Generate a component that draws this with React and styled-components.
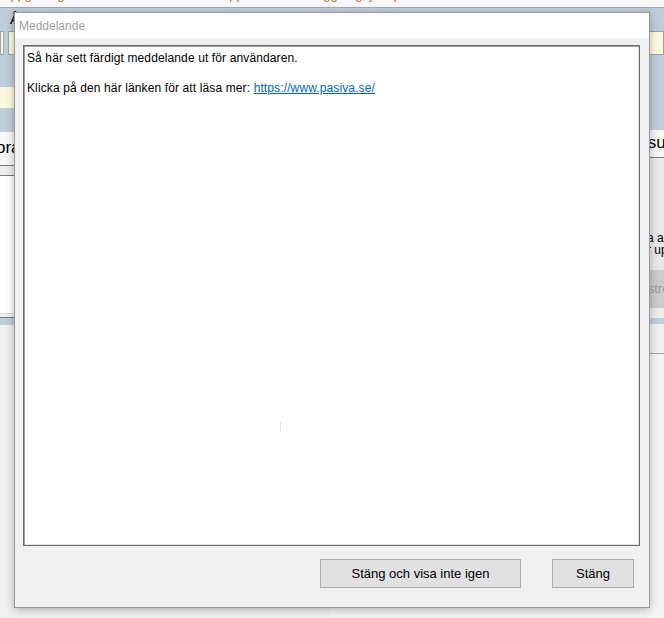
import styled, { createGlobalStyle } from 'styled-components'

const GlobalStyle = createGlobalStyle`
  html, body {
    margin: 0;
    padding: 0;
  }
  body {
    font-family: "Liberation Sans", Arial, sans-serif;
    background: #f0f0f0;
    overflow: hidden;
  }
`

const Screen = styled.div`
  position: relative;
  width: 664px;
  height: 618px;
  overflow: hidden;
`

// Background application, mostly hidden behind the dialog
const BackApp = styled.div`
  display: flex;
  flex-direction: column;
  height: 100%;
`

const Caption = styled.div`
  height: 7px;
  overflow: hidden;
  background: #f7f7f7;
  border-bottom: 1px solid #a7a7a7;
  color: #c8702e;
  font-size: 13px;
  line-height: 13px;
  white-space: nowrap;

  span {
    display: block;
    padding-left: 1px;
    transform: translateY(-12px);
  }
`

const Toolbar = styled.div`
  height: 23px;
  display: flex;
  justify-content: space-between;
  padding: 2px 10px 0 10px;
  box-sizing: border-box;
  background: #bfcddb;
  font-size: 15px;
  color: #000;
`

const FieldRow = styled.div`
  height: 24px;
  display: flex;
  gap: 4px;
  background: #bfcddb;
`

const Field = styled.div`
  flex: 0 0 ${p => p.$w}px;
  margin-left: ${p => p.$push ? 'auto' : '0'};
  background: #fbf9dd;
  border: 1px solid #9aa4ae;
  box-sizing: border-box;
`

const Panels = styled.div`
  flex: 1;
  display: flex;
`

const Pane = styled.div`
  display: flex;
  flex-direction: column;
  flex: ${p => p.$grow ? 1 : `0 0 ${p.$w}px`};
`

const Band = styled.div`
  flex: 0 0 ${p => p.$h}px;
  background: ${p => p.$bg || '#bfcddb'};
  border-bottom: ${p => p.$line ? `1px solid ${p.$line}` : 'none'};
  box-sizing: border-box;
`

const TabTitle = styled.div`
  flex: 0 0 ${p => p.$h}px;
  box-sizing: border-box;
  padding: ${p => p.$top}px 0 0 ${p => p.$indent}px;
  background: #f7f7f7;
  border-bottom: 1px solid #7a7a7a;
  font-size: 17px;
  line-height: 20px;
  white-space: nowrap;
  overflow: hidden;
  text-indent: ${p => p.$shift || 0}px;
`

const Fill = styled.div`
  flex: 1;
  background: ${p => p.$bg || '#f0f0f0'};
`

const SidePanel = styled.div`
  flex: 0 0 149px;
  display: flex;
  flex-direction: column;
  align-items: flex-start;
  padding: 74px 0 0 317px;
  box-sizing: border-box;
  background: #e8e8e8;
  font-size: 12px;
  line-height: 12px;
  white-space: nowrap;
`

const GreyButton = styled.div`
  margin: 14px 0 0 -26px;
  height: 38px;
  width: 120px;
  display: flex;
  align-items: center;
  background: #cbcbcb;
  color: #9a9a9a;
  font-size: 13px;
`

// Dialog
const Dialog = styled.div`
  position: absolute;
  left: 14px;
  top: 12px;
  width: 636px;
  height: 596px;
  box-sizing: border-box;
  display: flex;
  flex-direction: column;
  background: #f0f0f0;
  border: 1px solid #9a9a9a;
  box-shadow: 0 2px 8px rgba(0, 0, 0, 0.28);
`

const TitleBar = styled.div`
  flex: 0 0 25px;
  display: flex;
  align-items: center;
  padding-left: 4px;
  background: #fff;
  color: #a0a0a0;
  font-size: 12px;
`

const Body = styled.div`
  flex: 1;
  display: flex;
  flex-direction: column;
  padding: 7px 9px 0 8px;
`

const MessageBox = styled.div`
  position: relative;
  flex: 0 0 501px;
  box-sizing: border-box;
  padding: 5px 3px;
  background: #fff;
  border: 1px solid #6a6a6a;
  box-shadow: inset 1px 1px 0 #a0a0a0, inset -1px -1px 0 #e3e3e3;
  font-size: 12px;
  line-height: 15px;
  letter-spacing: 0.12px;
  color: #000;

  p {
    margin: 0 0 15px;
  }

  a {
    color: #0066cc;
    text-decoration: underline;
  }
`

const Caret = styled.span`
  position: absolute;
  left: 256px;
  top: 376px;
  width: 1px;
  height: 10px;
  background: #e4e4e4;
`

const Footer = styled.div`
  display: flex;
  justify-content: flex-end;
  gap: 31px;
  margin-top: 13px;
  padding-right: 6px;
`

const Button = styled.button`
  width: ${p => p.$w}px;
  height: 29px;
  padding: 0;
  background: #e1e1e1;
  border: 1px solid #adadad;
  font-family: "Liberation Sans", Arial, sans-serif;
  font-size: 13px;
  color: #000;
`

export default function App() {
  return (
    <>
      <GlobalStyle />
      <Screen>
        <BackApp>
          <Caption>
            <span>Uppgifter gällande meddelandet visas upp vid nästa inloggning, just på sidan</span>
          </Caption>
          <Toolbar>
            <span>Å</span>
          </Toolbar>
          <FieldRow>
            <Field $w={4} />
            <Field $w={200} />
            <Field $w={16} $push />
          </FieldRow>
          <Panels>
            <Pane $w={330}>
              <Band $h={32} />
              <Band $h={21} $bg="#fbf9dd" />
              <Band $h={24} />
              <TabTitle $h={34} $top={6} $indent={0} $shift={-4}>orationer</TabTitle>
              <Band $h={10} $bg="#ececec" $line="#7a7a7a" />
              <Band $h={138} $bg="#fff" $line="#d8d8d8" />
              <Band $h={4} $bg="#f0f0f0" $line="#7a7a7a" />
              <Band $h={7} />
              <Fill />
            </Pane>
            <Pane $grow>
              <Band $h={75} />
              <TabTitle $h={28} $top={3} $indent={296}>Resultat</TabTitle>
              <SidePanel>
                <span>a alla meddelanden</span>
                <span>r uppstart</span>
                <GreyButton>Registrera</GreyButton>
              </SidePanel>
              <Band $h={10} $bg="#ececec" />
              <Band $h={6} />
              <Band $h={30} $bg="#f0f0f0" $line="#a0a0a0" />
              <Fill $bg="#f4f4f4" />
            </Pane>
          </Panels>
        </BackApp>

        <Dialog>
          <TitleBar>Meddelande</TitleBar>
          <Body>
            <MessageBox>
              <p>Så här sett färdigt meddelande ut för användaren.</p>
              <p>
                Klicka på den här länken för att läsa mer:{' '}
                <a href="https://www.pasiva.se/">https://www.pasiva.se/</a>
              </p>
              <Caret />
            </MessageBox>
            <Footer>
              <Button $w={201}>Stäng och visa inte igen</Button>
              <Button $w={82}>Stäng</Button>
            </Footer>
          </Body>
        </Dialog>
      </Screen>
    </>
  )
}
